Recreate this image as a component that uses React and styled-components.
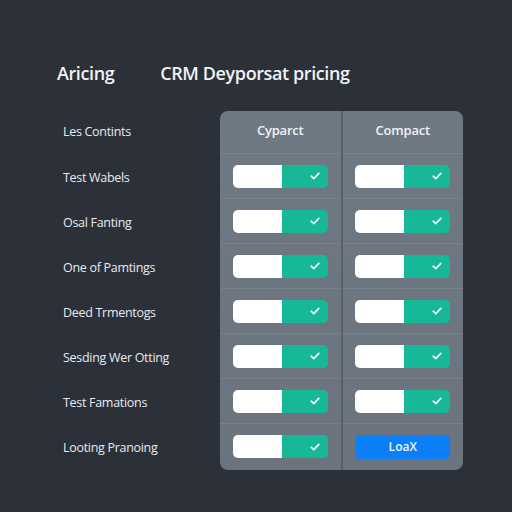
import React from 'react';
import styled, { createGlobalStyle } from 'styled-components';

const GlobalStyle = createGlobalStyle`
  html, body {
    margin: 0;
    padding: 0;
    background: #2b3039;
  }
  body {
    font-family: "Open Sans", "Noto Sans", sans-serif;
  }
`;

const Page = styled.div`
  width: 512px;
  height: 512px;
  box-sizing: border-box;
  padding: 60px 0 0 57px;
  background: #2b3039;
`;

const TitleBar = styled.div`
  display: flex;
  align-items: center;
  gap: 46px;
  height: 26px;
  color: #f1f2f4;
  font-size: 18px;
  font-weight: 600;
  letter-spacing: -0.4px;
`;

const Body = styled.div`
  display: flex;
  margin-top: 25px;
  margin-left: 6px;
`;

const Labels = styled.div`
  width: 157px;
  display: flex;
  flex-direction: column;
`;

const Label = styled.div`
  height: ${p => (p.$head ? 44 : 45)}px;
  box-sizing: border-box;
  padding-bottom: ${p => (p.$head ? 4 : 0)}px;
  display: flex;
  align-items: center;
  color: #e9ebee;
  font-size: 12.5px;
  letter-spacing: -0.3px;
`;

const Panel = styled.div`
  width: 243px;
  display: flex;
  border-radius: 8px;
  overflow: hidden;
  background: linear-gradient(180deg, #6f7984 0%, #6a737e 100%);
`;

const Column = styled.div`
  flex: 1;
  display: flex;
  flex-direction: column;
  border-right: ${p => (p.$first ? '2px solid #56606a' : 'none')};
`;

const HeadCell = styled.div`
  height: 43px;
  box-sizing: border-box;
  padding-bottom: 4px;
  display: flex;
  align-items: center;
  justify-content: center;
  color: #f0f2f4;
  font-size: 13px;
  font-weight: 600;
  letter-spacing: -0.2px;
  border-bottom: 1px solid #7a838d;
`;

const Cell = styled.div`
  height: ${p => (p.$last ? 45 : 44)}px;
  display: flex;
  align-items: center;
  justify-content: center;
  border-bottom: ${p => (p.$last ? 'none' : '1px solid #78818b')};
`;

const Toggle = styled.div`
  width: 95px;
  height: 23px;
  display: flex;
  border-radius: 5px;
  overflow: hidden;
`;

const ToggleOff = styled.div`
  width: 49px;
  background: #ffffff;
`;

const ToggleOn = styled.div`
  flex: 1;
  display: flex;
  align-items: center;
  justify-content: flex-end;
  padding-right: 8px;
  background: #17b897;
`;

const LoadButton = styled.button`
  width: 95px;
  height: 24px;
  border: none;
  border-radius: 5px;
  background: #0a7ff8;
  color: #f4f8ff;
  font-family: "Open Sans", sans-serif;
  font-size: 12px;
  font-weight: 600;
`;

const Check = () => (
  <svg width="10" height="8" viewBox="0 0 10 8" fill="none">
    <path d="M1.2 4.2 L3.8 6.6 L8.8 1.4" stroke="#ffffff" strokeWidth="1.6" strokeLinecap="round" strokeLinejoin="round" />
  </svg>
);

const Switch = () => (
  <Toggle>
    <ToggleOff />
    <ToggleOn>
      <Check />
    </ToggleOn>
  </Toggle>
);

const labels = [
  'Les Contints',
  'Test Wabels',
  'Osal Fanting',
  'One of Pamtings',
  'Deed Trmentogs',
  'Sesding Wer Otting',
  'Test Famations',
  'Looting Pranoing',
];

const rows = labels.length - 1;

export default function App() {
  return (
    <Page>
      <GlobalStyle />
      <TitleBar>
        <span>Aricing</span>
        <span>CRM Deyporsat pricing</span>
      </TitleBar>
      <Body>
        <Labels>
          {labels.map((l, i) => (
            <Label key={l} $head={i === 0}>{l}</Label>
          ))}
        </Labels>
        <Panel>
          <Column $first>
            <HeadCell>Cyparct</HeadCell>
            {Array.from({ length: rows }).map((_, i) => (
              <Cell key={i} $last={i === rows - 1}>
                <Switch />
              </Cell>
            ))}
          </Column>
          <Column>
            <HeadCell>Compact</HeadCell>
            {Array.from({ length: rows }).map((_, i) => (
              <Cell key={i} $last={i === rows - 1}>
                {i === rows - 1 ? <LoadButton>LoaX</LoadButton> : <Switch />}
              </Cell>
            ))}
          </Column>
        </Panel>
      </Body>
    </Page>
  );
}
